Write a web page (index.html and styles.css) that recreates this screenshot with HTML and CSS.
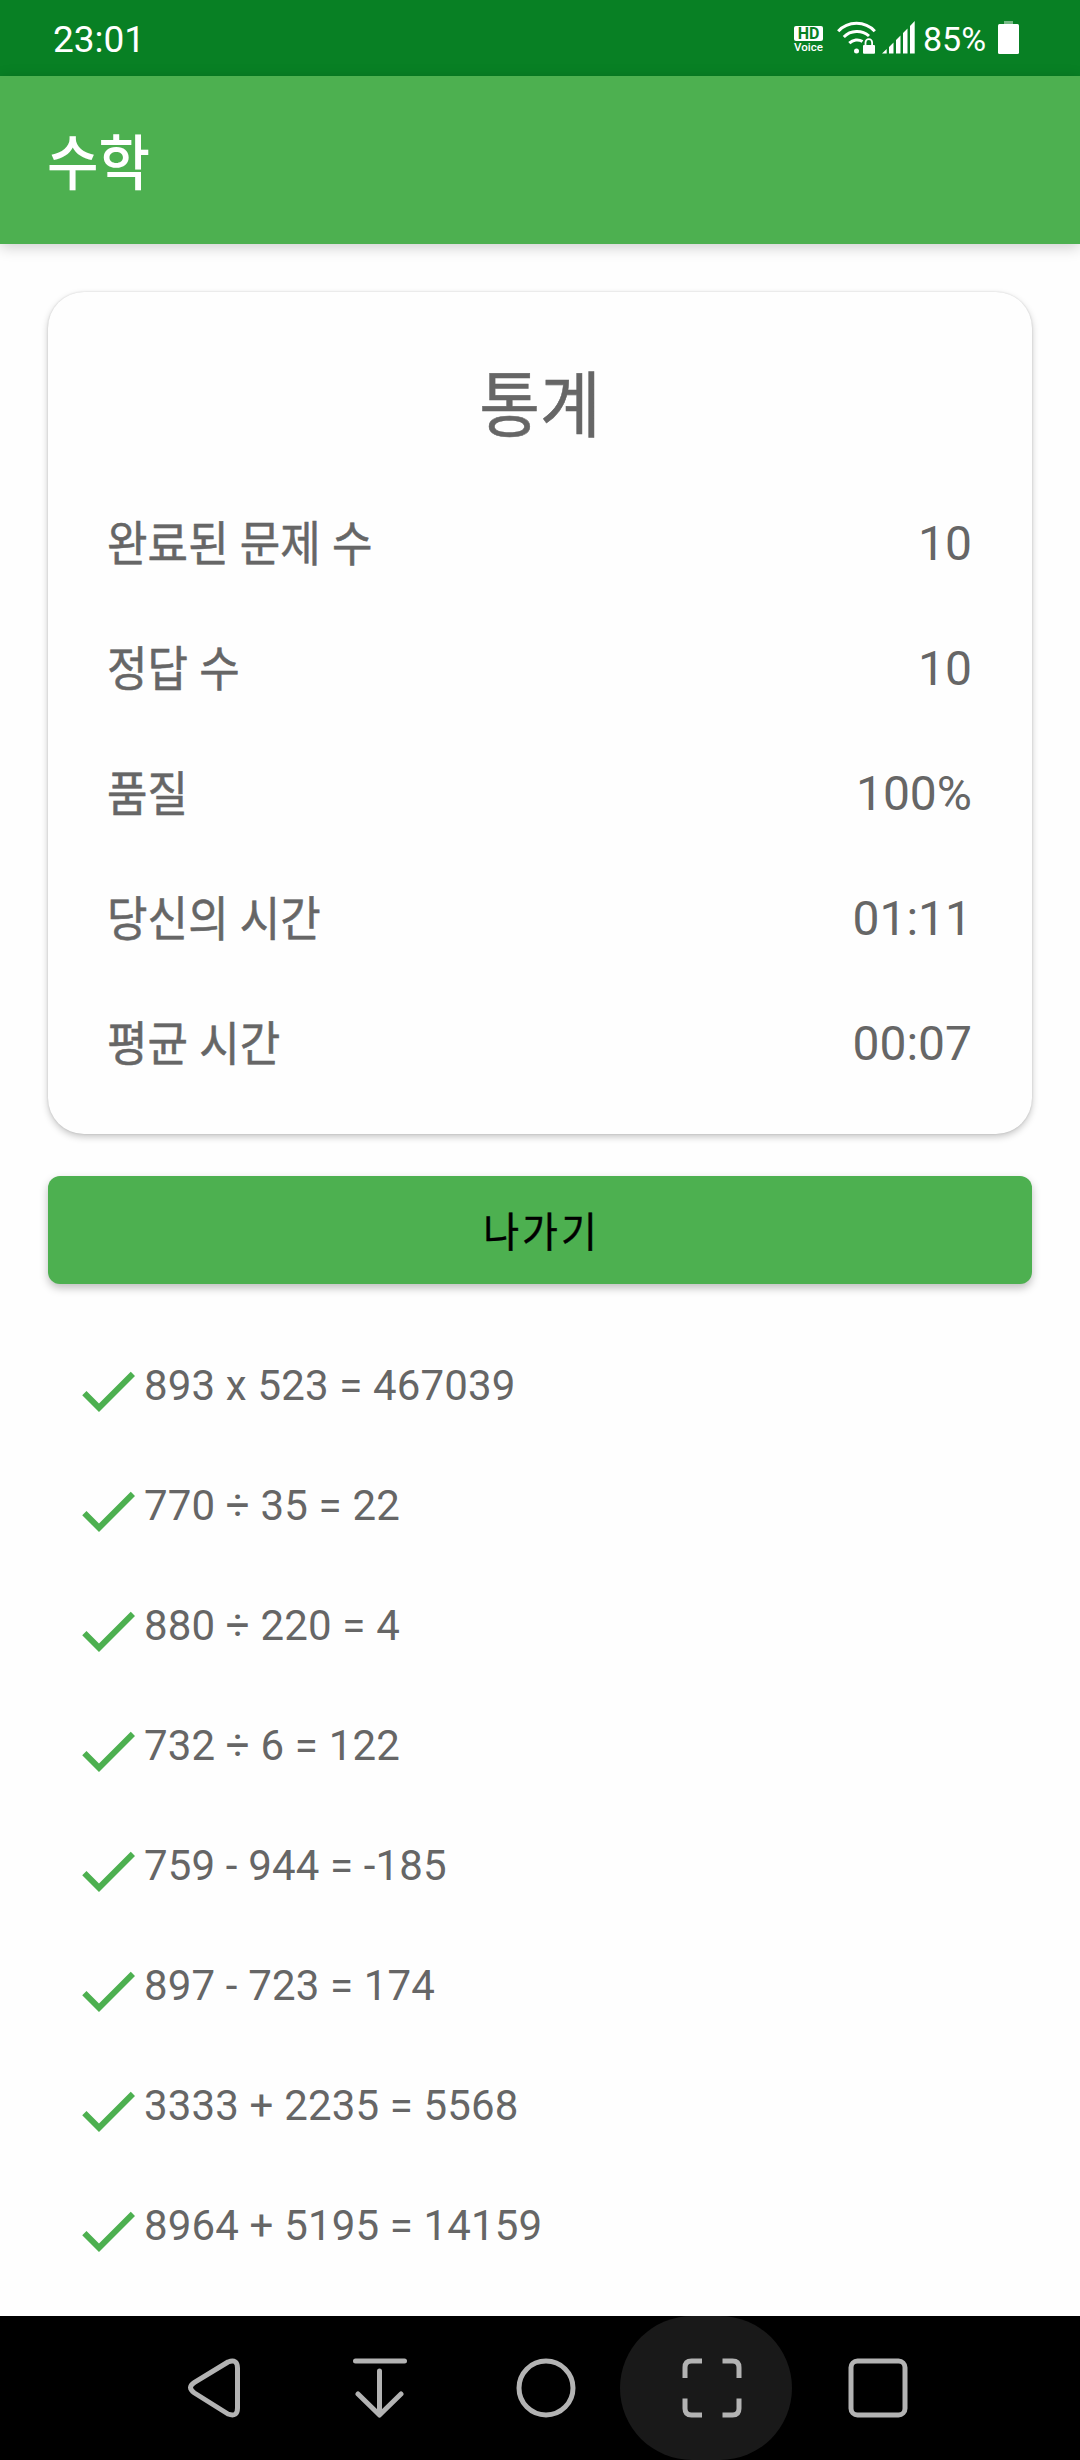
FILE: index.html
```html
<!DOCTYPE html>
<html lang="ko">
<head>
    <meta charset="UTF-8">
    <meta name="viewport" content="width=device-width, initial-scale=1.0">
    <title>수학</title>
    <link rel="stylesheet" href="styles.css">
</head>
<body>
    <div class="status-bar">
        <span class="clock">23:01</span>
        <div class="status-icons">
            <div class="hd"><span class="hd-box">HD</span><span class="hd-voice">Voice</span></div>
            <svg class="wifi" width="40" height="34" viewBox="0 0 40 34" fill="none" stroke="#fff" stroke-width="3">
                <path d="M1.2 10.2C11 -.5 28 -.5 37.800 10.200M6.800 16C13.500 9 25 8.800 32 15M12.300 22.200C16 18.600 21.500 18 25.500 20.500"/>
                <circle cx="19.500" cy="30" r="2.500" fill="#fff" stroke="none"/>
                <path d="M28.500 25v-3.500a3.300 3.300 0 0 1 6.600 0V25" stroke-width="1.800"/>
                <rect x="26" y="24" width="12" height="8.700" rx="1" fill="#fff" stroke="none"/>
            </svg>
            <svg class="signal" width="33" height="33" viewBox="0 0 33 33" fill="#fff">
                <path d="M0 32.500L4.700 28v4.500zM7 26l4.500-4.500v11H7zM14 19l4.500-4.500v18H14zM21 12l4.500-4.500v25H21zM28 5l4.700-5v32.500H28z"/>
            </svg>
            <span class="percent">85%</span>
            <svg class="battery" width="21" height="33" viewBox="0 0 21 33" fill="#fff">
                <rect x="6" y="0" width="9" height="3" opacity=".45"/>
                <rect x="0" y="3" width="21" height="30" rx="1.500"/>
            </svg>
        </div>
    </div>

    <header class="app-bar">
        <h1>수학</h1>
    </header>

    <main>
        <section class="card">
            <h2>통계</h2>
            <div class="stat"><span class="label">완료된 문제 수</span><span class="value">10</span></div>
            <div class="stat"><span class="label">정답 수</span><span class="value">10</span></div>
            <div class="stat"><span class="label">품질</span><span class="value">100%</span></div>
            <div class="stat"><span class="label">당신의 시간</span><span class="value">01:11</span></div>
            <div class="stat"><span class="label">평균 시간</span><span class="value">00:07</span></div>
        </section>

        <button type="button" class="exit"><span>나가기</span></button>

        <ul class="answers">
            <li><svg viewBox="0 0 24 24"><use href="#check"/></svg><span>893 x 523 = 467039</span></li>
            <li><svg viewBox="0 0 24 24"><use href="#check"/></svg><span>770 ÷ 35 = 22</span></li>
            <li><svg viewBox="0 0 24 24"><use href="#check"/></svg><span>880 ÷ 220 = 4</span></li>
            <li><svg viewBox="0 0 24 24"><use href="#check"/></svg><span>732 ÷ 6 = 122</span></li>
            <li><svg viewBox="0 0 24 24"><use href="#check"/></svg><span>759 - 944 = -185</span></li>
            <li><svg viewBox="0 0 24 24"><use href="#check"/></svg><span>897 - 723 = 174</span></li>
            <li><svg viewBox="0 0 24 24"><use href="#check"/></svg><span>3333 + 2235 = 5568</span></li>
            <li><svg viewBox="0 0 24 24"><use href="#check"/></svg><span>8964 + 5195 = 14159</span></li>
        </ul>
    </main>

    <nav class="nav-bar">
        <div class="nav-item">
            <svg viewBox="0 0 60 60"><path d="M44 4L10.500 24.300Q2.500 29.500 10.500 35L44 56Q53.500 59.500 53.500 50V10Q53.500 .5 44 4z"/></svg>
        </div>
        <div class="nav-item">
            <svg viewBox="0 0 60 60"><path d="M5.500 3h49M29.500 13v43.500M8 36l21.500 21L51 36"/></svg>
        </div>
        <div class="nav-item">
            <svg viewBox="0 0 60 60"><circle cx="30" cy="30" r="27"/></svg>
        </div>
        <div class="nav-item active">
            <svg viewBox="0 0 60 60"><path stroke-linecap="butt" d="M3 20V9.500Q3 3 9.500 3H20M40.500 3h10Q57 3 57 9.500V20M57 40.500v10Q57 57 50.500 57h-10M20 57H9.500Q3 57 3 50.500v-10"/></svg>
        </div>
        <div class="nav-item">
            <svg viewBox="0 0 60 60"><rect x="3" y="3" width="54" height="54" rx="6.500"/></svg>
        </div>
    </nav>

    <svg class="defs" width="0" height="0">
        <symbol id="check" viewBox="0 0 24 24"><path d="M9 16.170L4.830 12l-1.420 1.410L9 19 21 7l-1.410-1.410z"/></symbol>
    </svg>
</body>
</html>
```
FILE: styles.css
```css
* {
    box-sizing: border-box;
}
body {
    margin: 0;
    height: 2460px;
    display: flex;
    flex-direction: column;
    overflow: hidden;
    background-color: #fefefe;
    color: #666;
    font-family: Roboto, "Noto Sans CJK KR", sans-serif;
}
h1, h2, ul {
    margin: 0;
    padding: 0;
}

/* Status bar */
.status-bar {
    flex: none;
    height: 76px;
    padding: 0 61px 0 53px;
    display: flex;
    justify-content: space-between;
    background-color: #088024;
    color: #fff;
}
.clock {
    font-size: 37px;
    line-height: 79px;
}
.status-icons {
    display: flex;
    align-items: flex-start;
}
.hd {
    width: 29px;
    margin: 26px 14px 0 0;
    display: flex;
    flex-direction: column;
    align-items: center;
}
.hd-box {
    width: 29px;
    height: 15px;
    border-radius: 2px;
    background-color: #fff;
    color: #088024;
    font-size: 16px;
    font-weight: 700;
    line-height: 16px;
    text-align: center;
}
.hd-voice {
    font-size: 11.5px;
    font-weight: 500;
    line-height: 13px;
}
.wifi {
    margin-top: 21px;
}
.signal {
    margin: 21px 0 0 5px;
}
.percent {
    width: 64px;
    margin-left: 8px;
    font-size: 34px;
    line-height: 78px;
}
.battery {
    margin: 21px 0 0 11px;
}

/* Title bar */
.app-bar {
    flex: none;
    height: 168px;
    padding-left: 47px;
    background-color: #4db050;
    box-shadow: 0 3px 14px rgba(0, 0, 0, .2);
    color: #fff;
}
.app-bar h1 {
    font-size: 56px;
    font-weight: 500;
    line-height: 176px;
    transform: scaleY(1.08);
}

main {
    flex: 1;
    padding: 48px 48px 0;
}

/* Statistics */
.card {
    height: 842px;
    padding: 60px 60px 0;
    border-radius: 36px;
    background-color: #fefefe;
    box-shadow: 0 3px 7px rgba(0, 0, 0, .22), 0 0 2px rgba(0, 0, 0, .15);
}
.card h2 {
    height: 128px;
    font-size: 66px;
    font-weight: 400;
    line-height: 112px;
    text-align: center;
    transform: scaleY(1.08);
    -webkit-text-stroke: .5px #666;
}
.stat {
    height: 125px;
    display: flex;
    justify-content: space-between;
    line-height: 128px;
}
.label {
    margin-left: -1px;
    font-size: 44px;
    line-height: 130px;
    letter-spacing: .1px;
    transform: scaleY(1.08);
    -webkit-text-stroke: .5px #666;
}
.value {
    font-size: 48px;
}

.exit {
    display: block;
    width: 100%;
    height: 108px;
    margin-top: 42px;
    padding: 0 0 2px;
    border: none;
    border-radius: 12px;
    background-color: #4db050;
    box-shadow: 0 4px 8px rgba(0, 0, 0, .25);
    color: #000;
    font-family: inherit;
    font-size: 39px;
    letter-spacing: 3px;
}
.exit span {
    display: inline-block;
    margin-left: 3px;
    transform: scaleY(1.04);
    -webkit-text-stroke: .4px #000;
}

/* Answer list */
.answers {
    margin-top: 42px;
    padding-left: 24px;
    list-style: none;
}
.answers li {
    height: 120px;
    display: flex;
    font-size: 42px;
    line-height: 120px;
    letter-spacing: .15px;
}
.answers svg {
    width: 72px;
    height: 72px;
    margin-top: 29px;
    fill: #4db050;
}

/* Navigation buttons */
.nav-bar {
    flex: none;
    height: 144px;
    padding-left: 131px;
    display: flex;
    background-color: #000;
}
.nav-item {
    position: relative;
    width: 166px;
    display: flex;
    align-items: center;
    justify-content: center;
}
.nav-item svg {
    position: relative;
    width: 60px;
    height: 60px;
    fill: none;
    stroke: #b3b3b3;
    stroke-width: 5;
    stroke-linecap: round;
    stroke-linejoin: round;
}
.active::before {
    content: "";
    position: absolute;
    top: 0;
    left: -9px;
    width: 172px;
    height: 144px;
    border-radius: 72px;
    background-color: #191919;
}
.defs {
    position: absolute;
}
```
